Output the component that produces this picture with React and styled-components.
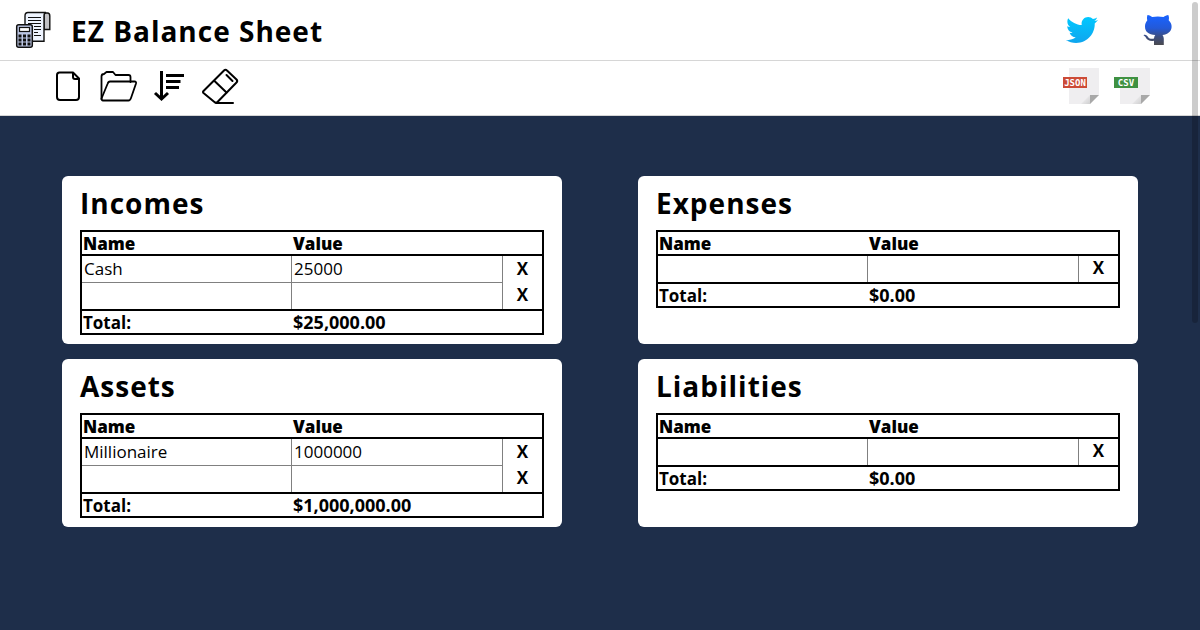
import React, { useId } from "react";
import styled, { createGlobalStyle, css } from "styled-components";
import { FaTwitter } from "react-icons/fa";

const GlobalStyle = createGlobalStyle`
  *, *::before, *::after { box-sizing: border-box; }
  body {
    margin: 0;
    background: #1e2e4a;
    color: #000;
    font-family: "Segoe UI", "Open Sans", "Noto Sans", sans-serif;
    font-size: 17px;
  }
  h1, h2 { margin: 0; }
`;

const bar = css`
  display: flex;
  justify-content: space-between;
  background: #fff;
  border-bottom: 1px solid #d6d6d6;
`;

const Header = styled.header`
  ${bar}
  align-items: center;
  height: 61px;
  padding: 0 24px 0 14px;
`;

const Brand = styled.div`
  display: flex;
  align-items: center;
  gap: 19px;
`;

const Title = styled.h1`
  font-size: 28px;
  line-height: 40px;
  letter-spacing: 1px;
  padding-top: 2px;
`;

const Links = styled.nav`
  display: flex;
  align-items: center;
  gap: 40px;
`;

const IconLink = styled.a`
  display: flex;
  justify-content: center;
  width: 36px;
`;

const Toolbar = styled.div`
  ${bar}
  align-items: flex-start;
  height: 55px;
  padding: 7px 50px 0 48px;
`;

const Tools = styled.div`
  display: flex;
  align-items: flex-start;
  gap: ${(p) => p.$gap}px;
`;

const IconButton = styled.button`
  display: flex;
  padding: 0;
  border: 0;
  background: none;
  cursor: pointer;
`;

const Board = styled.main`
  display: grid;
  grid-template-columns: repeat(auto-fit, minmax(500px, 1fr));
  justify-items: center;
  gap: 15px 0;
  padding: 60px 24px;
`;

const Card = styled.section`
  width: 500px;
  padding: 7px 18px 9px;
  border-radius: 6px;
  background: #fff;
`;

const CardTitle = styled.h2`
  font-size: 28px;
  line-height: 40px;
  letter-spacing: 1px;
  margin-bottom: 7px;
`;

const Sheet = styled.table`
  width: 100%;
  table-layout: fixed;
  border: 2px solid #000;
  border-collapse: separate;
  border-spacing: 0;
`;

const Column = styled.col`
  width: ${(p) => p.$width}px;
`;

const Heading = styled.th`
  height: 24px;
  padding: 2px 1px 0;
  border-bottom: 2px solid #000;
  font-weight: 800;
  line-height: 20px;
  text-align: left;
`;

const Entry = styled.td`
  height: 27px;
  padding: 0;
  border-right: 1px solid #808080;
  border-bottom: 1px solid #808080;
  tr:last-child > & {
    height: 26px;
    border-bottom: 0;
  }
`;

const Field = styled.input`
  display: block;
  width: 100%;
  height: 26px;
  padding: 0 2px 1px;
  border: 0;
  outline: 0;
  background: none;
  font: inherit;
`;

const Action = styled.td`
  padding: 0;
`;

const Remove = styled.button`
  display: block;
  width: 100%;
  height: 26px;
  padding: 0 0 4px;
  border: 0;
  background: none;
  font: inherit;
  font-weight: 700;
  cursor: pointer;
`;

const Sum = styled.td`
  height: 24px;
  padding: 1px 1px 0;
  border-top: 2px solid #000;
  font-size: ${(p) => (p.$amount ? 18 : 17)}px;
  font-weight: 700;
  line-height: 20px;
  vertical-align: baseline;
`;

const ScrollThumb = styled.div`
  position: fixed;
  top: 2px;
  right: 2px;
  width: 6px;
  height: 51vh;
  border-radius: 3px;
  background: rgba(0, 0, 0, 0.2);
`;

const Logo = () => (
  <svg width="38" height="38" viewBox="0 0 38 38" aria-hidden="true">
    <path d="M30 2h3.500q2.300 0 2.300 3v13.500H30z" fill="#c2c2c6" stroke="#111" strokeWidth="1.400" />
    <path d="M11 30.300V5q0-3.500 3-3.500h18q-2 .5-2 3.500v25.300z" fill="#eef4ff" stroke="#111" strokeWidth="1.400" />
    <path d="M14 6.500h13M14 9.500h13M14 12.500h13M20 15.500h7M20 18.500h7M20 21.500h4M20 24.500h7" stroke="#111" strokeWidth="1.200" />
    <rect x="2.700" y="13.700" width="15.600" height="22.600" rx="2" fill="#bcc6e4" stroke="#111" strokeWidth="1.500" />
    <rect x="5.500" y="16.500" width="10" height="4" fill="#fff" stroke="#111" strokeWidth="1.200" />
    <path d="M4.500 25h3M9 25h3M13.500 25h3M4.500 29h3M9 29h3M13.500 29h3M4.500 33h3M9 33h3M13.500 33h3" stroke="#111" strokeWidth="3" />
  </svg>
);

const TwitterIcon = () => (
  <>
    <svg width="0" height="0" aria-hidden="true">
      <linearGradient id="sky" x1="0" y1="0" x2="0" y2="1">
        <stop offset="0" stopColor="#00c8ff" />
        <stop offset="1" stopColor="#0fa5ee" />
      </linearGradient>
    </svg>
    <FaTwitter size={32} fill="url(#sky)" />
  </>
);

const OctocatIcon = () => (
  <svg width="36" height="36" viewBox="0 0 36 36" aria-hidden="true">
    <linearGradient id="cat" gradientUnits="userSpaceOnUse" x1="0" y1="5" x2="0" y2="33">
      <stop offset="0" stopColor="#1a62fb" />
      <stop offset=".4" stopColor="#2359d8" />
      <stop offset=".7" stopColor="#3c4d80" />
      <stop offset="1" stopColor="#4b4b4f" />
    </linearGradient>
    <path
      fill="url(#cat)"
      d="M7.500 3c2 0 3.500 1.200 4.800 2.100 3.500-.8 7.500-.8 11.200 0C25 4 26.500 3 28.300 3c.9 2 .8 3.800.4 5.200C30.500 10 31.800 12 31.600 15c-.3 5-4.100 7.300-9.100 8 .9 1.200 1.300 2.500 1.300 4v6H14v-4.300c-3.500.6-7-.2-8.200-3.200-.5-1.200-1.600-1.800-2.300-2.300 1.800-1.200 3.700.4 4.700 2 1.200 1.700 3.800 1.900 5.800 1.200.1-1.200.5-2.400 1.300-3.400C8.500 22.300 5 20 5 14.500c0-2.500.8-4.500 2.300-6.300-.5-1.800-.4-3.400.2-5.200z"
    />
  </svg>
);

const strokeProps = {
  width: 40,
  height: 40,
  viewBox: "1 2 40 40",
  fill: "none",
  stroke: "#000",
  strokeLinejoin: "round",
  strokeLinecap: "round",
  "aria-hidden": true,
};

const NewIcon = () => (
  <svg {...strokeProps} strokeWidth="2">
    <path d="M12.500 6.500H26l6 6V31q0 3-3 3H13q-3 0-3-3V9q0-2.500 2.500-2.500z" />
    <path d="M26 7v4q0 2 2 2H32" />
  </svg>
);

const OpenIcon = () => (
  <svg {...strokeProps} strokeWidth="1.800">
    <path d="M3.500 33V10.500Q3.500 8 6 8l2.500-2h6.500L17.500 9H30.500q2 0 2 2v5" />
    <path d="M3.500 32.500L9.500 18q.8-2.500 2.500-2.500H36.500q2 0 1.500 2l-5 14.500q-.8 2.500-2.500 2.500H5q-1.500 0-1.500-2z" />
  </svg>
);

const SortIcon = () => (
  <svg {...strokeProps} strokeWidth="3" strokeLinecap="butt" strokeLinejoin="miter">
    <path d="M12.500 5v28M6 27l6.500 6L19 27" />
    <path d="M17 9.500h18M17 15.500h14.500M17 21.500h13" />
  </svg>
);

const EraseIcon = () => (
  <svg {...strokeProps} strokeWidth="2">
    <path d="M3.500 25L24 4.500q1.500-1.500 3 0l9.500 9q1.500 1.500 0 3L17 36.500H15L3.500 27q-1-1 0-2z" />
    <path d="M14.500 15l12 11.500M26.500 9l6 6M16 37H33" />
  </svg>
);

const FileIcon = ({ label, color }) => {
  const shade = useId();
  return (
    <svg width="36" height="36" viewBox="0 0 36 36" aria-hidden="true">
      <linearGradient id={shade} x1="0" y1="0" x2="1" y2="1">
        <stop offset=".3" stopColor="#efeef0" />
        <stop offset="1" stopColor="#cfcfd0" />
      </linearGradient>
      <path d="M6 0h30v27l-9 9H6z" fill="#efeef0" />
      <path d="M18 36l9-9v9z" fill={`url(#${shade})`} />
      <path d="M27 27h9l-9 9z" fill="#a8a8a8" />
      <rect y="9" width="24" height="11" fill={color} />
      <text x="12" y="18" fill="#fff" fontFamily="DejaVu Sans Mono, monospace" fontSize="9" fontWeight="700" textAnchor="middle">
        {label}
      </text>
    </svg>
  );
};

const sheets = [
  { title: "Incomes", rows: [["Cash", "25000"], ["", ""]], total: "$25,000.00" },
  { title: "Expenses", rows: [["", ""]], total: "$0.00" },
  { title: "Assets", rows: [["Millionaire", "1000000"], ["", ""]], total: "$1,000,000.00" },
  { title: "Liabilities", rows: [["", ""]], total: "$0.00" },
];

const BalanceCard = ({ title, rows, total }) => (
  <Card>
    <CardTitle>{title}</CardTitle>
    <Sheet>
      <colgroup>
        <Column $width={210} />
        <col />
        <Column $width={39} />
      </colgroup>
      <thead>
        <tr>
          <Heading scope="col">Name</Heading>
          <Heading scope="col" colSpan={2}>Value</Heading>
        </tr>
      </thead>
      <tbody>
        {rows.map(([name, value], i) => (
          <tr key={i}>
            <Entry>
              <Field aria-label={`${title} name ${i + 1}`} defaultValue={name} />
            </Entry>
            <Entry>
              <Field aria-label={`${title} value ${i + 1}`} defaultValue={value} />
            </Entry>
            <Action>
              <Remove type="button" aria-label={`Remove row ${i + 1}`}>X</Remove>
            </Action>
          </tr>
        ))}
      </tbody>
      <tfoot>
        <tr>
          <Sum>Total:</Sum>
          <Sum $amount colSpan={2}>{total}</Sum>
        </tr>
      </tfoot>
    </Sheet>
  </Card>
);

export default function App() {
  return (
    <>
      <GlobalStyle />
      <Header>
        <Brand>
          <Logo />
          <Title>EZ Balance Sheet</Title>
        </Brand>
        <Links>
          <IconLink href="#twitter" aria-label="Twitter"><TwitterIcon /></IconLink>
          <IconLink href="#github" aria-label="GitHub"><OctocatIcon /></IconLink>
        </Links>
      </Header>
      <Toolbar>
        <Tools $gap={11}>
          <IconButton type="button" aria-label="New"><NewIcon /></IconButton>
          <IconButton type="button" aria-label="Open"><OpenIcon /></IconButton>
          <IconButton type="button" aria-label="Sort"><SortIcon /></IconButton>
          <IconButton type="button" aria-label="Clear"><EraseIcon /></IconButton>
        </Tools>
        <Tools $gap={15}>
          <IconButton type="button" aria-label="Export JSON"><FileIcon label="JSON" color="#cc4b37" /></IconButton>
          <IconButton type="button" aria-label="Export CSV"><FileIcon label="CSV" color="#3f9142" /></IconButton>
        </Tools>
      </Toolbar>
      <Board>
        {sheets.map((sheet) => (
          <BalanceCard key={sheet.title} {...sheet} />
        ))}
      </Board>
      <ScrollThumb />
    </>
  );
}
